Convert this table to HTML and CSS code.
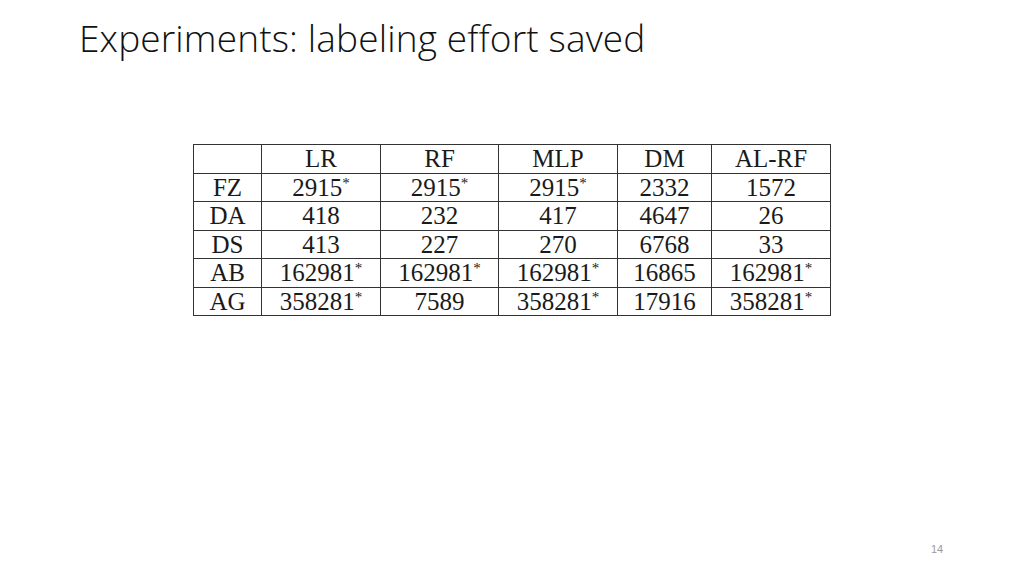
FILE: index.html
```html
<!DOCTYPE html>
<html>
<head>
<meta charset="utf-8">
<link rel="stylesheet" href="styles.css">
</head>
<body>
<div class="slide">
  <h1 class="title">Experiments: labeling effort saved</h1>
  <table class="results">
    <colgroup>
      <col class="c0"><col class="c1"><col class="c2"><col class="c3"><col class="c4"><col class="c5">
    </colgroup>
    <tr><td></td><td>LR</td><td>RF</td><td>MLP</td><td>DM</td><td>AL-RF</td></tr>
    <tr><td>FZ</td><td>2915<sup>*</sup></td><td>2915<sup>*</sup></td><td>2915<sup>*</sup></td><td>2332</td><td>1572</td></tr>
    <tr><td>DA</td><td>418</td><td>232</td><td>417</td><td>4647</td><td>26</td></tr>
    <tr><td>DS</td><td>413</td><td>227</td><td>270</td><td>6768</td><td>33</td></tr>
    <tr><td>AB</td><td>162981<sup>*</sup></td><td>162981<sup>*</sup></td><td>162981<sup>*</sup></td><td>16865</td><td>162981<sup>*</sup></td></tr>
    <tr><td>AG</td><td>358281<sup>*</sup></td><td>7589</td><td>358281<sup>*</sup></td><td>17916</td><td>358281<sup>*</sup></td></tr>
  </table>
  <div class="page-num">14</div>
</div>
</body>
</html>
```
FILE: styles.css
```css
html, body {
  margin: 0;
  padding: 0;
  background: #ffffff;
}
.slide {
  position: relative;
  width: 1024px;
  height: 576px;
  overflow: hidden;
}
.title {
  margin: 0;
  padding: 13px 0 0 79px;
  font-family: "Open Sans", sans-serif;
  font-weight: 300;
  font-size: 37px;
  line-height: 50px;
  color: #111111;
  letter-spacing: 0.15px;
}
.results {
  margin: 81px 0 0 193px;
  border-collapse: collapse;
  table-layout: fixed;
  width: 638px;
  font-family: "Liberation Serif", "DejaVu Serif", serif;
  font-size: 25px;
  color: #1a1a1a;
}
.c0 { width: 68px; }
.c1 { width: 119px; }
.c2 { width: 118px; }
.c3 { width: 119px; }
.c4 { width: 94px; }
.c5 { width: 119px; }
.results td {
  border: 1.5px solid #333333;
  height: 27.5px;
  padding: 0;
  text-align: center;
  line-height: 27px;
  white-space: nowrap;
}
.results sup {
  font-size: 15px;
  line-height: 0;
  vertical-align: 8px;
}
.page-num {
  position: absolute;
  left: 931px;
  top: 543px;
  font-family: "Liberation Sans", sans-serif;
  font-size: 11px;
  color: #999999;
}
```
